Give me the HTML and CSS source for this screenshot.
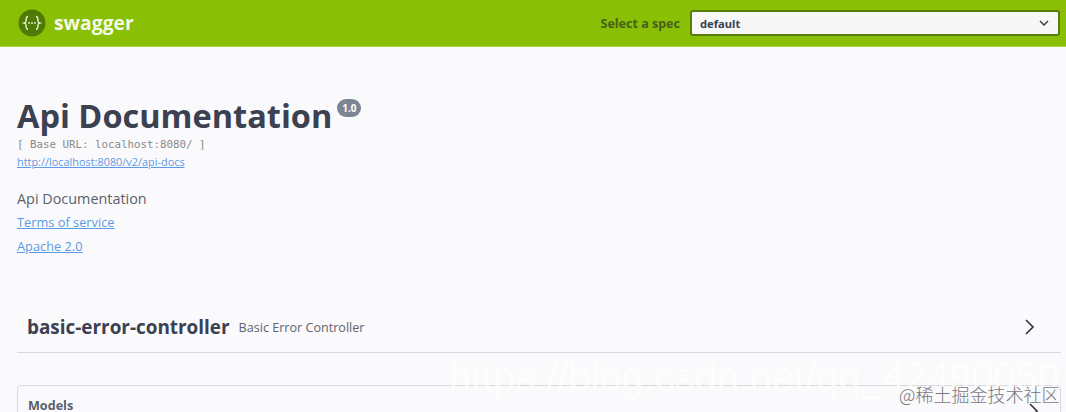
FILE: index.html
```html
<!DOCTYPE html>
<html lang="en">
<head>
<meta charset="utf-8">
<title>Swagger UI</title>
<link rel="stylesheet" href="styles.css">
</head>
<body>
<header class="topbar">
  <div class="brand">
    <svg class="logo" viewBox="0 0 30 30" width="30" height="30" aria-hidden="true">
      <circle cx="15" cy="15" r="13.5" fill="#4f7a06"/>
      <path d="M11 8.5c-2.6 0-1.6 4-2.2 5.2-.3.7-.9 1.1-1.6 1.3.7.2 1.3.6 1.6 1.3.6 1.2-.4 5.2 2.2 5.2M19 8.5c2.6 0 1.6 4 2.2 5.2.3.7.9 1.1 1.6 1.3-.7.2-1.3.6-1.6 1.3-.6 1.2.4 5.2-2.2 5.2" fill="none" stroke="#e8f3d0" stroke-width="1.4"/>
      <circle cx="12" cy="15" r=".9" fill="#e8f3d0"/><circle cx="15" cy="15" r=".9" fill="#e8f3d0"/><circle cx="18" cy="15" r=".9" fill="#e8f3d0"/>
    </svg>
    <span class="brand-name">swagger</span>
  </div>
  <div class="spec">
    <span class="spec-label">Select a spec</span>
    <div class="spec-select">
      <span>default</span>
      <svg viewBox="0 0 10 6" width="10" height="6" aria-hidden="true"><path d="M1 1l4 4 4-4" fill="none" stroke="#3b4151" stroke-width="1.5"/></svg>
    </div>
  </div>
</header>
<main class="page">
  <section class="info">
    <div class="title-row">
      <h1 class="title">Api Documentation</h1>
      <span class="version">1.0</span>
    </div>
    <p class="base-url">[ Base URL: localhost:8080/ ]</p>
    <a class="docs-link" href="#">http://localhost:8080/v2/api-docs</a>
    <p class="desc">Api Documentation</p>
    <a class="info-link" href="#">Terms of service</a>
    <a class="info-link" href="#">Apache 2.0</a>
  </section>
  <section class="tag">
    <div class="tag-text">
      <h2 class="tag-name">basic-error-controller</h2>
      <span class="tag-desc">Basic Error Controller</span>
    </div>
    <svg class="chevron" viewBox="0 0 12 18" width="12" height="18" aria-hidden="true"><path d="M2 2l7 7-7 7" fill="none" stroke="#2f3340" stroke-width="1.6"/></svg>
  </section>
  <section class="models">
    <h3 class="models-title">Models</h3>
    <svg class="chevron" viewBox="0 0 12 18" width="12" height="18" aria-hidden="true"><path d="M2 2l7 7-7 7" fill="none" stroke="#2f3340" stroke-width="1.6"/></svg>
  </section>
</main>
<div class="mark-url">https://blog.csdn.net/qq_42490050</div>
<div class="mark-juejin">@稀土掘金技术社区</div>
</body>
</html>
```
FILE: styles.css
```css
* { box-sizing: border-box; }
body {
  margin: 0;
  height: 412px;
  overflow: hidden;
  position: relative;
  background: #faf9fc;
  font-family: "Open Sans", sans-serif;
  color: #3b4151;
}
.topbar {
  height: 47px;
  background: #89bf04;
  border-bottom: 1px solid #a9d13a;
  display: flex;
  align-items: center;
  justify-content: space-between;
  padding: 0 6px 0 17px;
}
.brand { display: flex; align-items: center; gap: 7px; }
.logo { display: block; }
.brand-name {
  font-size: 19.3px;
  font-weight: 700;
  color: #f4f9e6;
  line-height: 1;
}
.spec { display: flex; align-items: center; gap: 10px; }
.spec-label {
  font-family: "Noto Sans", sans-serif;
  font-size: 12.5px;
  font-weight: 700;
  color: #46611c;
}
.spec-select {
  width: 370px;
  height: 26px;
  background: #f7f7f7;
  border: 2px solid #5a7d0a;
  border-radius: 3px;
  display: flex;
  align-items: center;
  justify-content: space-between;
  padding: 0 9px 0 8px;
  font-family: "Noto Sans", sans-serif;
  font-size: 11.2px;
  font-weight: 700;
  color: #3b4151;
}
.page { padding: 0 5px 0 17px; }
.info { padding-top: 48px; }
.title-row { display: flex; align-items: flex-start; }
.title {
  margin: 0;
  font-size: 32.5px;
  line-height: 42px;
  font-weight: 700;
  color: #3b4151;
}
.version {
  margin: 4px 0 0 5px;
  width: 24px;
  height: 18px;
  border-radius: 9px;
  background: #7d8492;
  color: #fff;
  font-size: 10px;
  font-weight: 700;
  line-height: 18px;
  text-align: center;
}
.base-url {
  margin: 1px 0 0;
  font-family: "DejaVu Sans Mono", monospace;
  font-size: 10.8px;
  line-height: 13px;
  color: #8a8a8a;
}
.docs-link, .info-link { display: block; color: #5b9be6; width: fit-content; }
.docs-link { margin-top: 3px; font-size: 10.9px; line-height: 15px; }
.desc { margin: 20px 0 0; font-size: 14.4px; line-height: 19px; color: #5a5f6a; }
.info-link { margin-top: 4px; font-size: 12.8px; line-height: 20px; }
.tag {
  margin-top: 46px;
  height: 51px;
  display: flex;
  align-items: center;
  justify-content: space-between;
  padding: 0 25px 0 10px;
  border-bottom: 1px solid #d9d9dc;
}
.tag-text { display: flex; align-items: center; gap: 9px; }
.tag-name { margin: 0; font-size: 18.9px; font-weight: 700; color: #3b4151; line-height: 24px; }
.tag-desc { font-size: 12.6px; color: #5f6470; }
.models {
  margin-top: 32px;
  height: 60px;
  border: 1px solid #d9d9dc;
  border-radius: 4px;
  display: flex;
  justify-content: space-between;
  padding: 11px 20px 0 10px;
}
.models-title { margin: 0; font-size: 12.6px; font-weight: 700; color: #5b606c; line-height: 18px; }
.models .chevron { margin-top: 5px; }
.mark-url {
  position: absolute;
  left: 449px;
  top: 352px;
  font-family: "Liberation Sans", sans-serif;
  font-size: 39.8px;
  line-height: 50px;
  white-space: nowrap;
  color: rgba(255, 255, 255, .75);
}
.mark-juejin {
  position: absolute;
  left: 899px;
  top: 384px;
  font-family: "Noto Sans CJK SC", sans-serif;
  font-size: 18px;
  font-weight: 300;
  line-height: 20px;
  white-space: nowrap;
  color: #77777c;
}
```
